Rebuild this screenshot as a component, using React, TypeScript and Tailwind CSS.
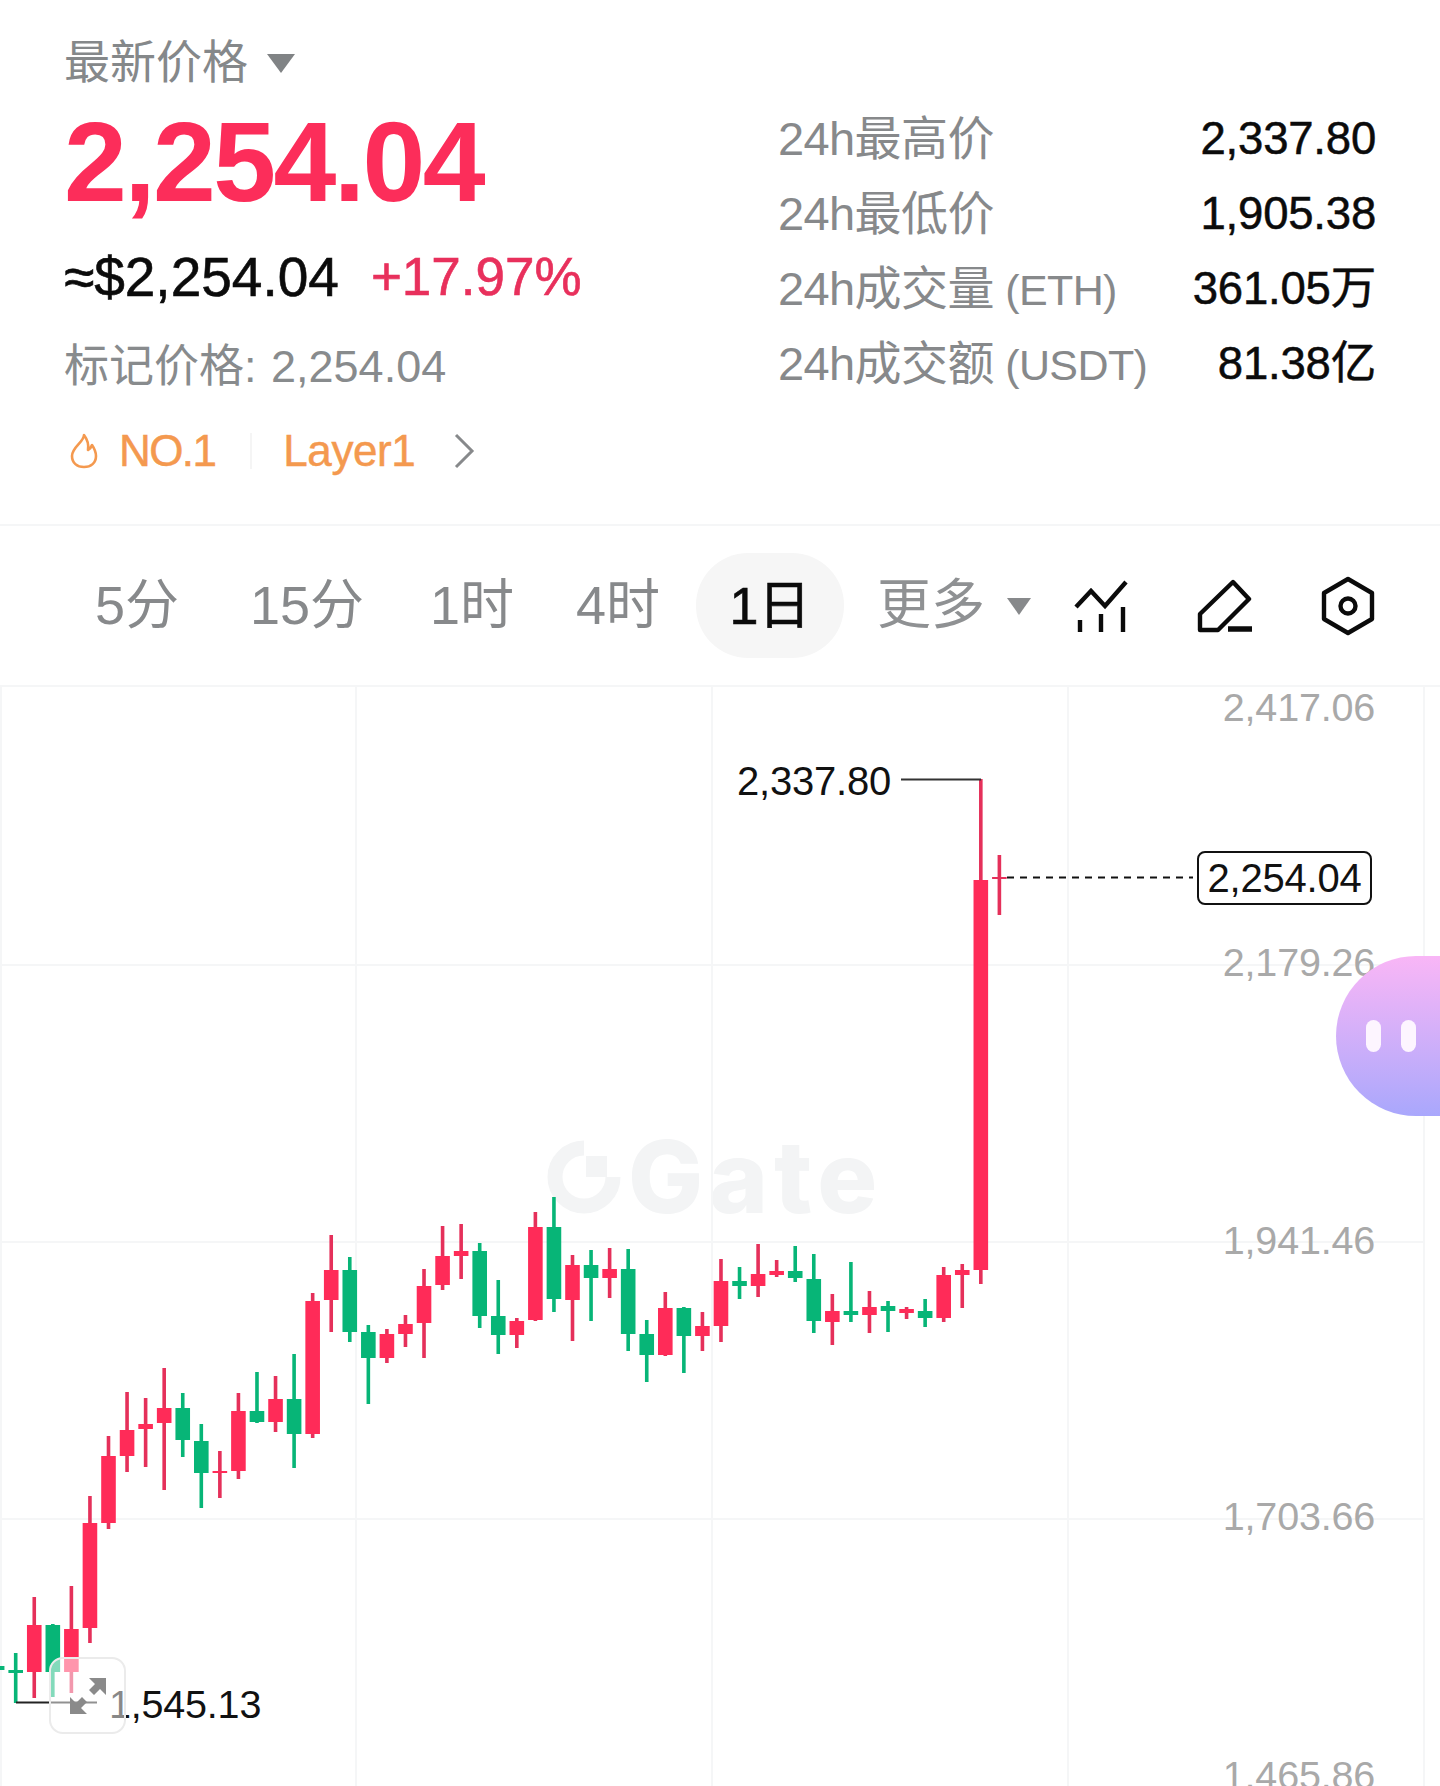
import * as React from 'react'

const RED = '#ff2b58'
const RED_WICK = '#e5305a'
const GREEN = '#07b577'

// color, wick top, wick bottom, body top, body bottom (page y coordinates)
const candles: [string, number, number, number, number][] = [
  ['g', 1664, 1672, 1666, 1670],
  ['g', 1653, 1703, 1670, 1673],
  ['r', 1597, 1698, 1625, 1672],
  ['g', 1624, 1697, 1625, 1672],
  ['r', 1586, 1693, 1629, 1672],
  ['r', 1496, 1643, 1523, 1628],
  ['r', 1436, 1529, 1456, 1523],
  ['r', 1392, 1472, 1430, 1456],
  ['r', 1398, 1467, 1424, 1429],
  ['r', 1368, 1490, 1408, 1423],
  ['g', 1393, 1457, 1408, 1440],
  ['g', 1424, 1508, 1441, 1473],
  ['r', 1451, 1498, 1471, 1473],
  ['r', 1393, 1479, 1411, 1471],
  ['g', 1372, 1423, 1411, 1422],
  ['r', 1376, 1432, 1399, 1422],
  ['g', 1354, 1468, 1399, 1434],
  ['r', 1293, 1438, 1301, 1434],
  ['r', 1235, 1332, 1270, 1300],
  ['g', 1257, 1342, 1270, 1332],
  ['g', 1325, 1404, 1332, 1358],
  ['r', 1329, 1363, 1334, 1358],
  ['r', 1315, 1347, 1324, 1334],
  ['r', 1269, 1358, 1286, 1323],
  ['r', 1226, 1290, 1256, 1285],
  ['r', 1224, 1279, 1251, 1256],
  ['g', 1243, 1328, 1251, 1316],
  ['g', 1280, 1354, 1316, 1335],
  ['r', 1318, 1348, 1321, 1335],
  ['r', 1212, 1321, 1227, 1320],
  ['g', 1197, 1312, 1227, 1299],
  ['r', 1255, 1341, 1265, 1300],
  ['g', 1250, 1321, 1265, 1278],
  ['r', 1248, 1298, 1269, 1278],
  ['g', 1249, 1351, 1269, 1334],
  ['g', 1320, 1382, 1334, 1355],
  ['r', 1292, 1356, 1308, 1355],
  ['g', 1307, 1373, 1308, 1336],
  ['r', 1312, 1351, 1326, 1336],
  ['r', 1259, 1342, 1281, 1326],
  ['g', 1267, 1299, 1281, 1286],
  ['r', 1244, 1297, 1274, 1286],
  ['r', 1260, 1277, 1271, 1275],
  ['g', 1246, 1282, 1271, 1278],
  ['g', 1254, 1333, 1279, 1321],
  ['r', 1294, 1345, 1311, 1322],
  ['g', 1262, 1322, 1311, 1315],
  ['r', 1291, 1333, 1307, 1315],
  ['g', 1301, 1332, 1306, 1311],
  ['r', 1307, 1319, 1309, 1313],
  ['g', 1299, 1327, 1311, 1318],
  ['r', 1267, 1322, 1275, 1318],
  ['r', 1264, 1308, 1270, 1275],
  ['r', 779, 1284, 880, 1270],
  ['r', 855, 915, 877, 879],
]

function Chart() {
  return (
    <svg className="absolute inset-0 h-full w-full" viewBox="0 687 1440 1099">
      {[1, 356, 712, 1068, 1424].map((x) => (
        <line key={x} x1={x} x2={x} y1={687} y2={1786} stroke="#f5f6f7" strokeWidth={2} />
      ))}
      {[965, 1242, 1519].map((y) => (
        <line key={y} x1={0} x2={1424} y1={y} y2={y} stroke="#f5f6f7" strokeWidth={2} />
      ))}
      {candles.map(([c, wt, wb, bt, bb], i) => {
        const x = -2.86 + 18.56 * i
        const last = i === candles.length - 1
        const body = c === 'r' ? RED : GREEN
        const wick = c === 'r' ? RED_WICK : GREEN
        const top = Math.min(bt, bb)
        const h = Math.abs(bb - bt)
        return (
          <g key={i}>
            <rect x={x - 1.8} y={wt} width={3.6} height={wb - wt} fill={wick} />
            <rect x={x - 7.3} y={top} width={14.6} height={h} fill={last ? wick : body} />
          </g>
        )
      })}
      <path d="M901 779.5H981" stroke="#333" strokeWidth={2} fill="none" />
      <path d="M1007 877.5H1193" stroke="#111" strokeWidth={2} strokeDasharray="7 6" fill="none" />
      <path d="M16 1702.5H97" stroke="#222" strokeWidth={2} fill="none" />
    </svg>
  )
}

function AxisLabel({ className, children }: { className: string; children: React.ReactNode }) {
  return (
    <div className={`absolute right-[65px] text-[39.5px] leading-[40px] tracking-[-0.2px] text-[#a9a9a9] ${className}`}>
      {children}
    </div>
  )
}

function Watermark() {
  return (
    <div className="absolute left-[547px] top-[452px] flex items-center text-[#f3f4f5]">
      <svg width="78" height="74" viewBox="0 0 78 74">
        <path d="M37 8A29 29 0 1 0 66 37" stroke="currentColor" strokeWidth="15" fill="none" />
        <rect x="39" y="16" width="21" height="21" fill="currentColor" />
      </svg>
      <span className="ml-[3px] text-[100px] font-extrabold leading-[76px] tracking-[6px] [font-family:Inter,sans-serif]">Gate</span>
    </div>
  )
}

function Caret({ className }: { className: string }) {
  return <div className={`h-0 w-0 border-x-[12px] border-t-[17px] border-x-transparent ${className}`} />
}

function Stat({ label, unit, value }: { label: string; unit?: string; value: string }) {
  return (
    <div className="flex h-[75px] items-center justify-between">
      <span className="text-[47px] tracking-[-0.6px] text-[#87898b]">
        {label}
        {unit && <span className="text-[43px]"> {unit}</span>}
      </span>
      <span className="text-[45.5px] tracking-[-0.2px] text-[#0b0b0b] [-webkit-text-stroke:0.5px_#0b0b0b]">{value}</span>
    </div>
  )
}

function Header() {
  return (
    <div className="flex h-[526px] justify-between border-b-2 border-[#f5f6f7]">
      <div className="pl-[64px] pt-[34px]">
        <div className="flex h-[56px] items-center text-[46px] text-[#85888a]">
          <span>最新价格</span>
          <Caret className="ml-[19px] mt-[2px] border-t-[#808385] border-x-[14px] border-t-[19px]" />
        </div>
        <div className="mt-[7px] h-[130px] text-[113px] font-bold leading-[130px] tracking-[-2.6px] text-[#fc2d5a]">
          2,254.04
        </div>
        <div className="mt-[20px] flex h-[60px] items-center leading-[60px]">
          <span className="text-[55px] text-[#0b0b0b] [-webkit-text-stroke:0.6px_#0b0b0b]">≈$2,254.04</span>
          <span className="ml-[32px] text-[53px] text-[#e8305c] [-webkit-text-stroke:0.6px_#e8305c]">+17.97%</span>
        </div>
        <div className="mt-[30px] h-[60px] text-[45px] leading-[60px] text-[#888b8d]">
          标记价格: <span className="ml-[2px]">2,254.04</span>
        </div>
        <div className="mt-[26px] flex h-[56px] items-center text-[44px] text-[#f4994f]">
          <svg width="30" height="36" viewBox="0 0 30 36" className="ml-[5px]" fill="none">
            <path
              d="M15 2C15 9 3 14 3 23C3 30 8 34 15 34C22 34 27 30 27 23C27 18 25 15 23 12C22 15 21 16 19 17C20 11 18 6 15 2Z"
              stroke="#f4994f"
              strokeWidth="2.6"
              strokeLinejoin="round"
            />
          </svg>
          <span className="ml-[20px] tracking-[-1.6px] [-webkit-text-stroke:0.5px_#f4994f]">NO.1</span>
          <div className="ml-[35px] h-[36px] w-[2px] bg-[#f5f5f5]" />
          <span className="ml-[31px] tracking-[-0.4px] [-webkit-text-stroke:0.5px_#f4994f]">Layer1</span>
          <svg width="22" height="36" viewBox="0 0 22 36" className="ml-[38px]" fill="none">
            <path d="M3 2L19 18L3 34" stroke="#87898b" strokeWidth="3" />
          </svg>
        </div>
      </div>
      <div className="mr-[64px] w-[598px] pt-[102px]">
        <Stat label="24h最高价" value="2,337.80" />
        <Stat label="24h最低价" value="1,905.38" />
        <Stat label="24h成交量" unit="(ETH)" value="361.05万" />
        <Stat label="24h成交额" unit="(USDT)" value="81.38亿" />
      </div>
    </div>
  )
}

function Toolbar() {
  return (
    <div className="flex h-[161px] items-center whitespace-nowrap border-b-2 border-[#f5f6f7] text-[54px] text-[#87898b]">
      <span className="ml-[95px] w-[85px]">5分</span>
      <span className="ml-[70px] w-[112px]">15分</span>
      <span className="ml-[68px] w-[82px]">1时</span>
      <span className="ml-[64px] w-[84px]">4时</span>
      <div className="ml-[36px] flex h-[105px] w-[148px] items-center justify-center rounded-[52px] bg-[#f6f6f6] text-[52px] text-[#0b0b0b] [-webkit-text-stroke:0.6px_#0b0b0b]">
        1日
      </div>
      <span className="ml-[33px] w-[108px] text-[#8f9193]">更多</span>
      <Caret className="ml-[22px] mt-[1px] border-t-[#87898b]" />
      <svg width="54" height="54" viewBox="0 0 54 54" className="ml-[43px]" fill="none" stroke="#0b0b0b" strokeWidth="4.4">
        <path d="M2 28L17 12L31 27L52 3" />
        <path d="M6 41V53M27 35V53M49 28V53" />
      </svg>
      <svg width="56" height="54" viewBox="0 0 56 54" className="ml-[69px]" fill="none" stroke="#0b0b0b" strokeWidth="4.4">
        <path d="M3 35L36 3L52 20L21 51H3Z" strokeLinejoin="round" />
        <path d="M31 50H55" strokeWidth="5.5" />
      </svg>
      <svg width="54" height="60" viewBox="0 0 54 60" className="ml-[68px]" fill="none" stroke="#0b0b0b" strokeWidth="4.4">
        <path d="M27 3L51 17V43L27 57L3 43V17Z" strokeLinejoin="round" />
        <circle cx="27" cy="30" r="7.5" />
      </svg>
    </div>
  )
}

export default function App() {
  return (
    <div className="relative h-[1786px] w-[1440px] overflow-hidden bg-white [font-family:'Liberation_Sans','Noto_Sans_CJK_SC',sans-serif]">
      <Header />
      <Toolbar />
      <div className="relative h-[1099px] overflow-hidden">
        <Watermark />
        <Chart />
        <AxisLabel className="top-0">2,417.06</AxisLabel>
        <AxisLabel className="top-[255px]">2,179.26</AxisLabel>
        <AxisLabel className="top-[533px]">1,941.46</AxisLabel>
        <AxisLabel className="top-[809px]">1,703.66</AxisLabel>
        <AxisLabel className="top-[1068px]">1,465.86</AxisLabel>

        <div className="absolute left-[737px] top-[69px] text-[40px] leading-[50px] tracking-[-0.2px] text-[#111]">2,337.80</div>
        <div className="absolute left-[1197px] top-[164px] flex h-[54px] w-[175px] items-center justify-center rounded-[8px] border-2 border-[#111] bg-white text-[40px] tracking-[-0.2px] text-[#111]">
          2,254.04
        </div>
        <div className="absolute left-[109px] top-[992px] text-[39.5px] leading-[50px] tracking-[-0.2px] text-[#111]">1,545.13</div>

        <div className="absolute left-[49px] top-[970px] flex h-[77px] w-[77px] items-center justify-center rounded-[14px] border-2 border-[#ebebeb] bg-white/50">
          <svg width="38" height="38" viewBox="0 0 38 38" fill="#8a8a8a">
            <path d="M37 1V18L31 12L25 18L20 13L26 7L20 1Z" />
            <path d="M1 37V20L7 26L13 20L18 25L12 31L18 37Z" />
          </svg>
        </div>

        <div className="absolute right-0 top-[269px] flex h-[160px] w-[104px] items-center gap-[20px] rounded-l-[80px] bg-gradient-to-b from-[#f9b6f6] to-[#a9a7fc] pl-[30px]">
          <div className="h-[32px] w-[15px] rounded-full bg-[#fdf5ff]" />
          <div className="h-[32px] w-[15px] rounded-full bg-[#fdf5ff]" />
        </div>
      </div>
    </div>
  )
}
